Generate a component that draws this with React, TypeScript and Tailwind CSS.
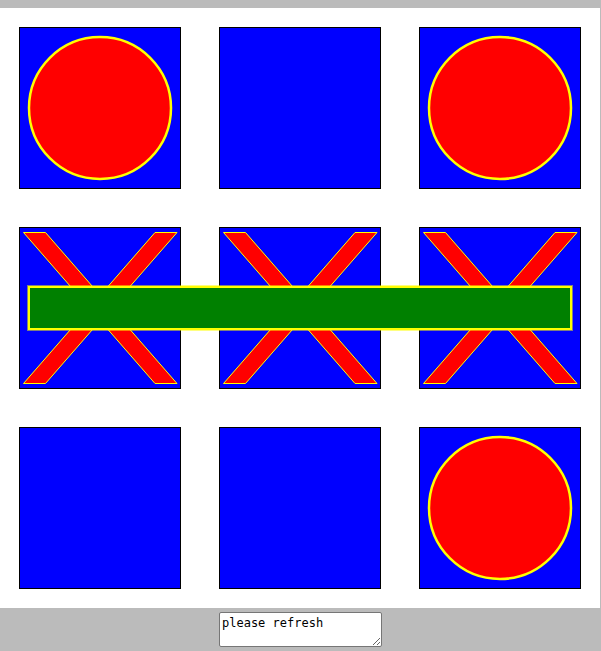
const board = ["O", "", "O", "X", "X", "X", "", "", "O"];

function Cell({ mark }: { mark: string }) {
  return (
    <div className="flex h-[200px] w-[200px] items-center justify-center">
      <div className="h-[162px] w-[162px] border border-black bg-[#0000ff]">
        <svg width="160" height="160" viewBox="0 0 160 160">
          {mark === "O" && (
            <circle cx="80" cy="80" r="71" fill="#ff0000" stroke="#ffff00" strokeWidth="2.5" />
          )}
          {mark === "X" && (
            <g fill="#ff0000" stroke="#ffff00" strokeWidth="1">
              <polygon points="3.5,4.5 25.5,4.5 157,155.5 135,155.5" />
              <polygon points="135,4.5 157,4.5 25.5,155.5 3.5,155.5" />
            </g>
          )}
        </svg>
      </div>
    </div>
  );
}

export default function App() {
  return (
    <div className="min-h-screen bg-[#bbbbbb] pt-2">
      <div className="relative grid w-[600px] grid-cols-3 bg-white">
        {board.map((mark, i) => (
          <Cell key={i} mark={mark} />
        ))}
        {/* winning line */}
        <div className="absolute left-[28px] top-[278px] h-[44px] w-[544px] border-2 border-[#ffff00] bg-[#008000] outline outline-1 outline-[#ffff0080]" />
      </div>
      <div className="flex justify-center pt-1">
        <textarea
          defaultValue="please refresh"
          className="h-[35px] w-[163px] rounded-[2px] border border-[#767676] bg-white px-[2px] pt-[3px] text-[12px] leading-[14px] text-black"
          style={{ fontFamily: '"DejaVu Sans Mono", "Liberation Mono", monospace' }}
        />
      </div>
    </div>
  );
}
